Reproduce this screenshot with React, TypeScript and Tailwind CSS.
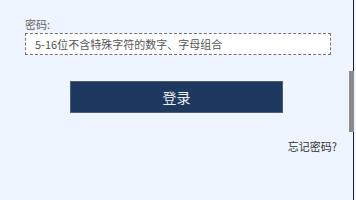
import React from "react";

export default function App() {
  return (
    <div
      className="relative h-[200px] w-[356px] overflow-hidden bg-[#eef5fe]"
      style={{ fontFamily: '"Noto Sans CJK SC", "Liberation Sans", sans-serif' }}
    >
      <div className="flex flex-col pt-[17px]">
        <label className="ml-[25px] text-[11px] leading-[14px] text-[#666]">密码:</label>
        <div className="ml-[25px] mt-[2px] flex h-[22px] w-[306px] items-center border border-dashed border-[#6f747c] bg-white pl-[9px]">
          <span className="text-[11px] leading-none text-[#555]">5-16位不含特殊字符的数字、字母组合</span>
        </div>
        <button className="ml-[70px] mt-[26px] h-[32px] w-[213px] border border-[#4d5f78] bg-[#1e395f] text-[14px] text-[#f0f0f0]">
          登录
        </button>
        <div className="mt-[26px] w-[337px] text-right text-[11px] leading-[14px] text-[#333]">忘记密码?</div>
      </div>
      {/* scrollbar */}
      <div className="absolute right-[2px] top-0 h-full w-px bg-[#222]" />
      <div className="absolute right-[2px] top-[71px] h-[61px] w-[5px] bg-[#8a8a8a]" />
    </div>
  );
}
